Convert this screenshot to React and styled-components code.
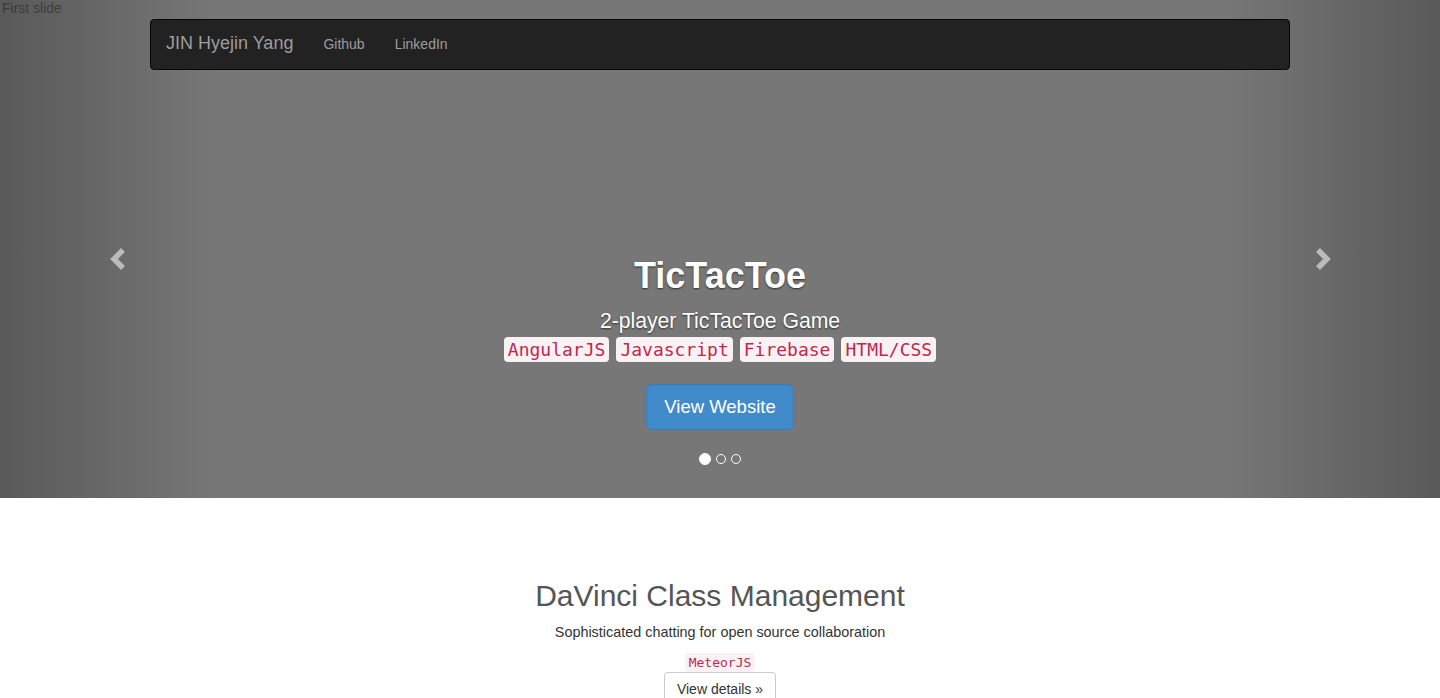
import React from 'react';
import styled, { createGlobalStyle } from 'styled-components';

const GlobalStyle = createGlobalStyle`
    body {
        margin: 0;
        font-family: "Liberation Sans", Arial, sans-serif;
        font-size: 14px;
        color: #333;
        background: #fff;
    }
`;

const Carousel = styled.section`
    position: relative;
    height: 498px;
    background: #777;
    display: flex;
    flex-direction: column;
    align-items: center;
    overflow: hidden;
`;

const SlideImage = styled.div`
    position: absolute;
    inset: 0;
    font-size: 14px;
    line-height: 16px;
    color: #4d4d4d;
    padding: 0 0 0 2px;
`;

const Control = styled.div`
    position: absolute;
    top: 0;
    bottom: 0;
    width: 15%;
    display: flex;
    align-items: center;
    justify-content: center;
    ${props => props.side === 'left' ? 'left: 0;' : 'right: 0;'}
    background: linear-gradient(
        ${props => props.side === 'left' ? 'to right' : 'to left'},
        rgba(0, 0, 0, 0.25),
        rgba(0, 0, 0, 0)
    );

    svg {
        margin-left: ${props => props.side === 'left' ? '22px' : '-20px'};
        margin-top: 20px;
    }
`;

const Navbar = styled.nav`
    position: relative;
    z-index: 2;
    margin-top: 19px;
    width: 1140px;
    height: 51px;
    padding-bottom: 2px;
    box-sizing: border-box;
    background: #222;
    border: 1px solid #080808;
    border-radius: 4px;
    display: flex;
    align-items: center;
`;

const Brand = styled.a`
    padding: 0 15px;
    font-size: 18px;
    color: #9d9d9d;
    text-decoration: none;
`;

const NavLink = styled.a`
    padding: 0 15px;
    font-size: 14px;
    color: #9d9d9d;
    text-decoration: none;
`;

const Caption = styled.div`
    position: relative;
    z-index: 2;
    margin-top: 186px;
    display: flex;
    flex-direction: column;
    align-items: center;
    color: #fff;
    text-shadow: 0 1px 2px rgba(0, 0, 0, 0.6);
`;

const Title = styled.h1`
    margin: 0;
    font-size: 36px;
    line-height: 40px;
    font-weight: 700;
`;

const Subtitle = styled.h3`
    margin: 14px 0 0;
    font-size: 21.2px;
    line-height: 22px;
    font-weight: 400;
`;

const Tags = styled.div`
    margin-top: 5px;
    display: flex;
    gap: 7px;
`;

const Code = styled.code`
    font-family: "DejaVu Sans Mono", "Liberation Mono", monospace;
    font-size: ${props => props.size || 18}px;
    line-height: ${props => props.size ? 16 : 21}px;
    padding: 2px 4px;
    color: #c7254e;
    background: #f9f2f4;
    border-radius: 4px;
    text-shadow: none;
`;

const PrimaryButton = styled.a`
    margin-top: 22px;
    padding: 10px 17px;
    font-size: 18.5px;
    line-height: 24px;
    color: #fff;
    background: #428bca;
    border: 1px solid #357ebd;
    border-radius: 6px;
    text-decoration: none;
    text-shadow: none;
`;

const Indicators = styled.ol`
    margin: 23px 0 0;
    padding: 0;
    list-style: none;
    display: flex;
    align-items: center;
    gap: 5px;
`;

const Dot = styled.li`
    box-sizing: border-box;
    width: ${props => props.active ? 12 : 10}px;
    height: ${props => props.active ? 12 : 10}px;
    border-radius: 50%;
    border: 1px solid #fff;
    background: ${props => props.active ? '#fff' : 'transparent'};
`;

const Featurette = styled.section`
    padding-top: 80px;
    display: flex;
    flex-direction: column;
    align-items: center;
    text-align: center;
`;

const Heading = styled.h2`
    margin: 0;
    font-size: 30px;
    line-height: 35px;
    font-weight: 400;
    color: #555;
`;

const Lead = styled.p`
    margin: 9px 0 0;
    font-size: 14.4px;
    line-height: 20px;
    color: #333;
`;

const CodeLine = styled.p`
    margin: 10px 0 0;
    line-height: 20px;
`;

const DefaultButton = styled.a`
    padding: 6px 12px;
    font-size: 14px;
    line-height: 20px;
    color: #333;
    background: #fff;
    border: 1px solid #ccc;
    border-radius: 4px;
    text-decoration: none;
`;

const Chevron = ({ dir }) => (
    <svg width="20" height="24" viewBox="0 0 20 24">
        <polyline
            points={dir === 'left' ? '14,3 5,12 14,21' : '6,3 15,12 6,21'}
            fill="none"
            stroke="#bbb"
            strokeWidth="5.5"
            strokeLinejoin="miter"
        />
    </svg>
);

const tags = ['AngularJS', 'Javascript', 'Firebase', 'HTML/CSS'];

const App = () => {
    return (
        <>
            <GlobalStyle />
            <Carousel>
                <SlideImage>First slide</SlideImage>
                <Control side="left"><Chevron dir="left" /></Control>
                <Control side="right"><Chevron dir="right" /></Control>
                <Navbar>
                    <Brand href="#">JIN Hyejin Yang</Brand>
                    <NavLink href="#">Github</NavLink>
                    <NavLink href="#">LinkedIn</NavLink>
                </Navbar>
                <Caption>
                    <Title>TicTacToe</Title>
                    <Subtitle>2-player TicTacToe Game</Subtitle>
                    <Tags>
                        {tags.map(t => <Code key={t}>{t}</Code>)}
                    </Tags>
                    <PrimaryButton href="#">View Website</PrimaryButton>
                    <Indicators>
                        <Dot active />
                        <Dot />
                        <Dot />
                    </Indicators>
                </Caption>
            </Carousel>
            <Featurette>
                <Heading>DaVinci Class Management</Heading>
                <Lead>Sophisticated chatting for open source collaboration</Lead>
                <CodeLine><Code size={13}>MeteorJS</Code></CodeLine>
                <DefaultButton href="#">View details &raquo;</DefaultButton>
            </Featurette>
        </>
    );
};

export default App;
